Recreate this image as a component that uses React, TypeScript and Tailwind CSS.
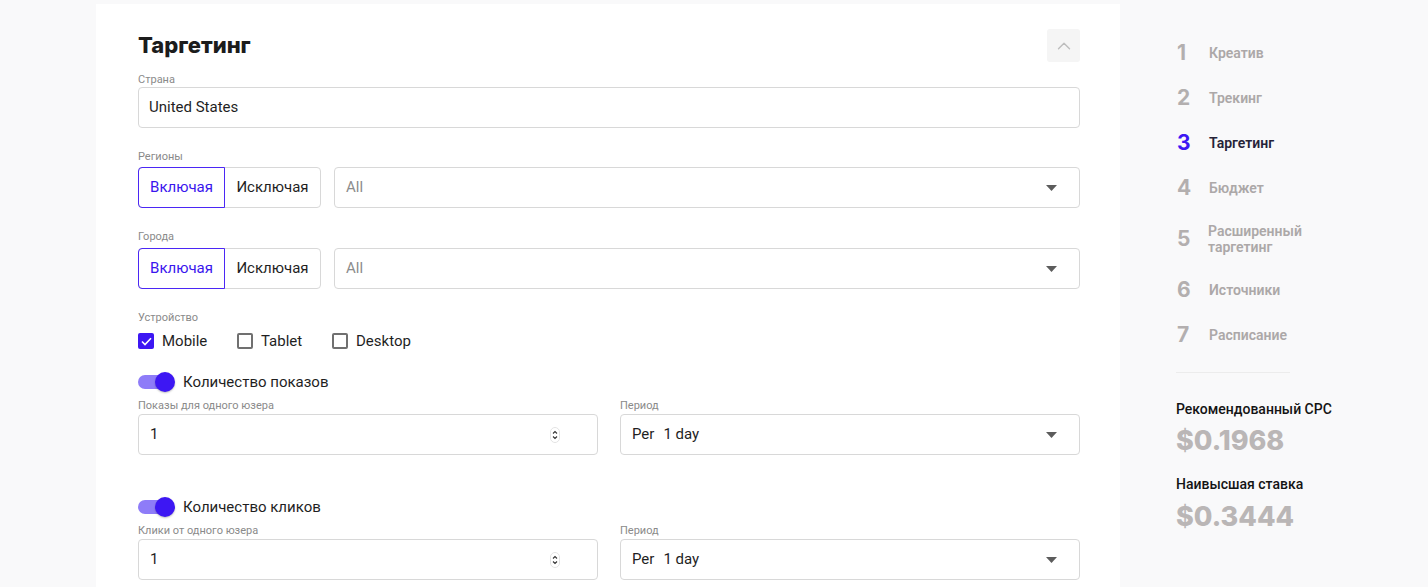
import { ChevronUp } from "lucide-react";

const BLUE = "#3d17f3";

function Caret() {
  return (
    <svg width="11" height="6" viewBox="0 0 11 6" className="shrink-0">
      <path d="M0 0h11L5.5 6z" fill="#5c5c5c" />
    </svg>
  );
}

function Spinner() {
  return (
    <svg width="10" height="16" viewBox="0 0 10 16" className="shrink-0">
      <rect x="0.5" y="0.5" width="9" height="15" rx="4.5" fill="#fff" stroke="#e3e3e3" />
      <path d="M3 6.5l2-2 2 2" fill="none" stroke="#333" strokeWidth="1.1" />
      <path d="M3 9.5l2 2 2-2" fill="none" stroke="#333" strokeWidth="1.1" />
    </svg>
  );
}

function Label({ children, className = "" }: { children: React.ReactNode; className?: string }) {
  return <div className={`text-[11px] leading-[14px] text-[#8a8a8a] ${className}`}>{children}</div>;
}

function Select({ value, muted, prefix }: { value: string; muted?: boolean; prefix?: string }) {
  return (
    <div className="flex h-[41px] flex-1 items-center justify-between rounded-[4px] border border-[#d8d8d8] bg-white pl-[11px] pr-[22px]">
      <span className={`text-[15px] ${muted ? "text-[#8c8c8c]" : "text-[#1f1f1f]"}`}>
        {prefix && <span className="mr-[9px]">{prefix}</span>}
        {value}
      </span>
      <Caret />
    </div>
  );
}

function IncludeExclude() {
  return (
    <div className="flex h-[41px] w-[183px] shrink-0 rounded-[4px] border border-[#d8d8d8] text-[15px]">
      <div className="-m-px mr-0 flex w-[87px] items-center justify-center rounded-l-[4px] border border-[#4b27f5] text-[#3a16ee]">
        Включая
      </div>
      <div className="flex flex-1 items-center justify-center text-[#1f1f1f]">Исключая</div>
    </div>
  );
}

function Checkbox({ checked, label }: { checked?: boolean; label: string }) {
  return (
    <div className="flex items-center gap-[8px]">
      {checked ? (
        <span className="flex h-[16px] w-[16px] items-center justify-center rounded-[2px]" style={{ background: BLUE }}>
          <svg width="11" height="9" viewBox="0 0 11 9">
            <path d="M1 4.5l3 3L10 1.2" fill="none" stroke="#fff" strokeWidth="1.6" />
          </svg>
        </span>
      ) : (
        <span className="h-[16px] w-[16px] rounded-[2px] border-2 border-[#707070]" />
      )}
      <span className="text-[15px] text-[#1f1f1f]">{label}</span>
    </div>
  );
}

function Switch({ label }: { label: string }) {
  return (
    <div className="flex h-[24px] items-center gap-[8px]">
      <div className="relative h-[24px] w-[37px]">
        <div className="absolute left-0 top-[5px] h-[14px] w-[34px] rounded-full bg-[#8e7cf8]" />
        <div
          className="absolute right-0 top-[2px] h-[20px] w-[20px] rounded-full shadow-[0_1px_2px_rgba(0,0,0,0.25)]"
          style={{ background: BLUE }}
        />
      </div>
      <span className="text-[15px] text-[#1f1f1f]">{label}</span>
    </div>
  );
}

function NumberField({ label }: { label: string }) {
  return (
    <div className="w-[460px]">
      <Label>{label}</Label>
      <div className="mt-[1px] flex h-[41px] items-center justify-between rounded-[4px] border border-[#d8d8d8] bg-white pl-[11px] pr-[37px]">
        <span className="text-[15px] text-[#1f1f1f]">1</span>
        <Spinner />
      </div>
    </div>
  );
}

function PeriodField() {
  return (
    <div className="flex w-[460px] flex-col">
      <Label>Период</Label>
      <div className="mt-[1px] flex">
        <Select prefix="Per" value="1 day" />
      </div>
    </div>
  );
}

const steps = [
  { n: "1", label: "Креатив" },
  { n: "2", label: "Трекинг" },
  { n: "3", label: "Таргетинг", active: true },
  { n: "4", label: "Бюджет" },
  { n: "5", label: "Расширенный таргетинг", two: true },
  { n: "6", label: "Источники" },
  { n: "7", label: "Расписание" },
];

export default function App() {
  return (
    <div
      className="flex h-[587px] overflow-hidden bg-[#f9f9fa]"
      style={{ fontFamily: "Roboto, 'Liberation Sans', sans-serif" }}
    >
      <div className="w-[96px] shrink-0" />

      {/* Main card */}
      <div className="mt-[4px] w-[1024px] shrink-0 bg-white pl-[42px] pr-[40px] pt-[25px]">
        <div className="flex h-[33px] items-center justify-between">
          <h2 className="text-[22px] font-extrabold text-[#1c1c1c]" style={{ fontFamily: "Inter, sans-serif" }}>
            Таргетинг
          </h2>
          <button className="flex h-[33px] w-[33px] items-center justify-center rounded-[3px] bg-[#f5f5f5]">
            <ChevronUp className="h-[22px] w-[22px] text-[#bdbdbd]" strokeWidth={1.5} />
          </button>
        </div>

        <Label className="mt-[11px]">Страна</Label>
        <div className="flex h-[41px] items-center rounded-[4px] border border-[#d8d8d8] px-[10px] text-[15px] text-[#1f1f1f]">
          United States
        </div>

        <Label className="mt-[22px]">Регионы</Label>
        <div className="mt-[3px] flex gap-[13px]">
          <IncludeExclude />
          <Select value="All" muted />
        </div>

        <Label className="mt-[22px]">Города</Label>
        <div className="mt-[4px] flex gap-[13px]">
          <IncludeExclude />
          <Select value="All" muted />
        </div>

        <Label className="mt-[22px]">Устройство</Label>
        <div className="mt-[6px] flex h-[20px] items-center">
          <div className="w-[99px]">
            <Checkbox checked label="Mobile" />
          </div>
          <div className="w-[95px]">
            <Checkbox label="Tablet" />
          </div>
          <Checkbox label="Desktop" />
        </div>

        <div className="mt-[19px]">
          <Switch label="Количество показов" />
        </div>
        <div className="mt-[5px] flex justify-between">
          <NumberField label="Показы для одного юзера" />
          <PeriodField />
        </div>

        <div className="mt-[40px]">
          <Switch label="Количество кликов" />
        </div>
        <div className="mt-[5px] flex justify-between">
          <NumberField label="Клики от одного юзера" />
          <PeriodField />
        </div>
      </div>

      {/* Sidebar */}
      <div className="flex-1 pl-[56px] pt-[30px]">
        {steps.map((s) => (
          <div key={s.n} className={`flex items-center ${s.two ? "h-[57px]" : "h-[45px]"}`}>
            <span
              className="w-[33px] pl-[1px] text-[21px] font-bold"
              style={{ color: s.active ? BLUE : "#b3afaf", fontFamily: "Inter, sans-serif" }}
            >
              {s.n}
            </span>
            <span
              className={`text-[14px] font-semibold leading-[16px] ${s.active ? "text-[#262338]" : "text-[#aca8a8]"} ${
                s.two ? "-ml-[1px] w-[110px]" : ""
              }`}
            >
              {s.label}
            </span>
          </div>
        ))}

        <div className="mt-[15px] h-px w-[114px] bg-[#ececec]" />

        <div className="mt-[26px] text-[14px] font-medium leading-[20px] text-[#141414]">Рекомендованный CPC</div>
        <div
          className="mt-[6px] text-[27px] font-extrabold leading-[32px] text-[#bab6b6]"
          style={{ fontFamily: "Inter, sans-serif" }}
        >
          $0.1968
        </div>
        <div className="mt-[17px] text-[14px] font-medium leading-[20px] text-[#141414]">Наивысшая ставка</div>
        <div
          className="mt-[7px] text-[27px] font-extrabold leading-[32px] text-[#bab6b6]"
          style={{ fontFamily: "Inter, sans-serif" }}
        >
          $0.3444
        </div>
      </div>
    </div>
  );
}
